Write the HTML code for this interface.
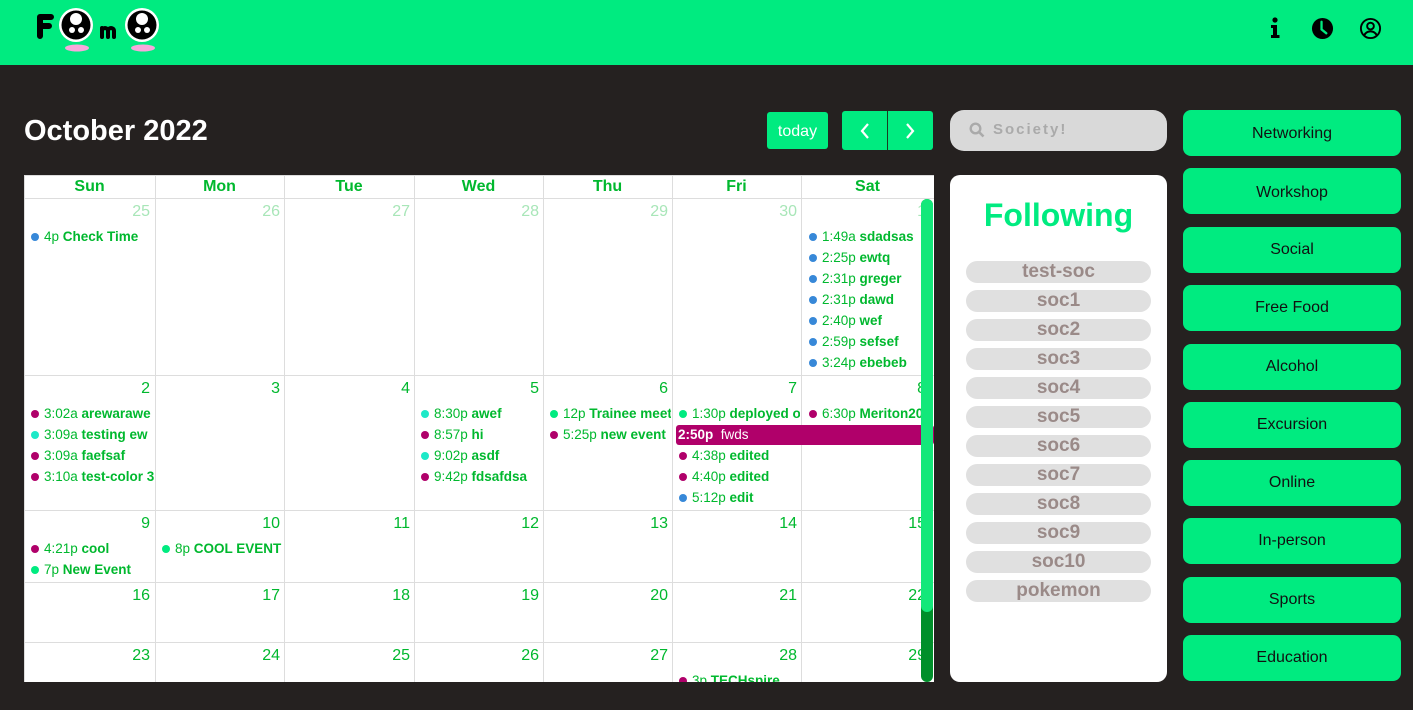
<!DOCTYPE html>
<html><head><meta charset="utf-8"><style>
*{margin:0;padding:0;box-sizing:border-box}
body{width:1413px;height:710px;background:#252120;font-family:"Liberation Sans",sans-serif;position:relative;overflow:hidden}
.a{position:absolute}
.hdr{left:0;top:0;width:1413px;height:65px;background:#00eb80}
.cal{left:24px;top:175px;width:910px;height:507px;background:#fff;overflow:hidden}
.vl{position:absolute;top:0;width:1px;height:507px;background:#ddd}
.hl{position:absolute;left:0;width:910px;height:1px;background:#ddd}
.dh{position:absolute;top:3px;font-weight:bold;font-size:16px;color:#00b82e;text-align:center}
.dn{position:absolute;font-size:16px;color:#00b82e;text-align:right}
.dn.o{color:#a8e6b8}
.ev{position:absolute;font-size:13.5px;color:#00b82e;white-space:nowrap;overflow:hidden;height:18px;line-height:18px}
.ev i{display:inline-block;width:8px;height:8px;border-radius:50%;margin:0 5px 0 0;vertical-align:0px}
.ev b{font-weight:bold}
.B{background:#3788d8}.C{background:#1de9c8}.M{background:#b0006a}.G{background:#00eb80}
.pill{position:absolute;left:966px;width:185px;height:22px;border-radius:11px;background:#e0e0e0;color:#9a8a88;font-size:19px;font-weight:bold;text-align:center;line-height:22px}
.btn{position:absolute;left:1183px;width:218px;height:46px;border-radius:8px;background:#00eb80;color:#111;font-size:16px;text-align:center;line-height:46px}
</style></head><body>
<div class="a hdr"></div>
<svg class="a" style="left:0;top:0" width="180" height="60" viewBox="0 0 180 60">
<path d="M40 36V17h11M40 26h9" stroke="#000" stroke-width="6" stroke-linecap="round" stroke-linejoin="round" fill="none"/>
<circle cx="76" cy="25" r="17" fill="#fff"/><circle cx="76" cy="25" r="14.5" fill="#000"/>
<circle cx="76" cy="19" r="6" fill="#fff"/><circle cx="72" cy="30" r="3" fill="#fff"/><circle cx="81" cy="30" r="3" fill="#fff"/>
<path d="M102 37v-9M102 31c0-4 6-4 6 0v6M108 31c0-4 6-4 6 0v6" stroke="#000" stroke-width="4" stroke-linecap="round" fill="none"/>
<circle cx="142" cy="25" r="17" fill="#fff"/><circle cx="142" cy="25" r="14.5" fill="#000"/>
<circle cx="142" cy="19" r="6" fill="#fff"/><circle cx="138" cy="30" r="3" fill="#fff"/><circle cx="147" cy="30" r="3" fill="#fff"/>
<ellipse cx="77" cy="48" rx="12" ry="3.5" fill="#f7a8dc"/><ellipse cx="143" cy="48" rx="12" ry="3.5" fill="#f7a8dc"/>
</svg>
<svg class="a" style="left:1266px;top:17px" width="18" height="22" viewBox="0 0 18 22"><circle cx="9" cy="3" r="2.6" fill="#000"/><path d="M5 8h6v10h2.5v3h-8.5v-3h2v-7h-2z" fill="#000"/></svg>
<svg class="a" style="left:1311px;top:17px" width="23" height="23" viewBox="0 0 24 24"><circle cx="12" cy="12" r="11" fill="#000"/><path d="M11 5v8l5 4" stroke="#00eb80" stroke-width="2.4" fill="none" stroke-linecap="round"/></svg>
<svg class="a" style="left:1359px;top:17px" width="23" height="23" viewBox="0 0 24 24" fill="none" stroke="#000" stroke-width="2"><circle cx="12" cy="12" r="10"/><circle cx="12" cy="9.5" r="3.5"/><path d="M5.5 19c1.5-3 4-4 6.5-4s5 1 6.5 4"/></svg>

<div class="a" style="left:24px;top:115px;color:#fff;font-weight:bold;font-size:29px">October 2022</div>
<div class="a" style="left:767px;top:112px;width:61px;height:37px;background:#00eb80;border-radius:3px;color:#fff;font-size:16px;text-align:center;line-height:39px">today</div>
<div class="a" style="left:842px;top:111px;width:91px;height:39px;background:#00eb80;border-radius:3px"></div>
<div class="a" style="left:887px;top:111px;width:1px;height:39px;background:#1a3a20"></div>
<svg class="a" style="left:858px;top:122px" width="14" height="18"><path d="M10 2L4 9l6 7" stroke="#fff" stroke-width="2.2" fill="none"/></svg>
<svg class="a" style="left:903px;top:122px" width="14" height="18"><path d="M4 2l6 7-6 7" stroke="#fff" stroke-width="2.2" fill="none"/></svg>
<div class="a" style="left:950px;top:110px;width:217px;height:41px;background:#d9d9d9;border-radius:14px"></div>
<svg class="a" style="left:969px;top:122px" width="16" height="16"><circle cx="6.5" cy="6.5" r="4.8" stroke="#aaa" stroke-width="2.4" fill="none"/><path d="M10 10l4.5 4.5" stroke="#aaa" stroke-width="2.6"/></svg>
<div class="a" style="left:993px;top:121px;color:#aaa;font-weight:bold;font-size:15px;letter-spacing:2px">Society!</div>

<div class="a cal">
<div class="vl" style="left:0"></div><div class="vl" style="left:131px"></div><div class="vl" style="left:260px"></div><div class="vl" style="left:390px"></div><div class="vl" style="left:519px"></div><div class="vl" style="left:648px"></div><div class="vl" style="left:777px"></div>
<div class="hl" style="top:0"></div><div class="hl" style="top:23px"></div><div class="hl" style="top:200px"></div><div class="hl" style="top:335px"></div><div class="hl" style="top:407px"></div><div class="hl" style="top:467px"></div>
<div class="dh" style="left:0;width:131px">Sun</div><div class="dh" style="left:131px;width:129px">Mon</div><div class="dh" style="left:260px;width:130px">Tue</div><div class="dh" style="left:390px;width:129px">Wed</div><div class="dh" style="left:519px;width:129px">Thu</div><div class="dh" style="left:648px;width:129px">Fri</div><div class="dh" style="left:777px;width:133px">Sat</div>

<div class="dn o" style="left:0;width:126px;top:28px">25</div><div class="dn o" style="left:131px;width:125px;top:28px">26</div><div class="dn o" style="left:260px;width:126px;top:28px">27</div><div class="dn o" style="left:390px;width:125px;top:28px">28</div><div class="dn o" style="left:519px;width:125px;top:28px">29</div><div class="dn o" style="left:648px;width:125px;top:28px">30</div><div class="dn o" style="left:777px;width:125px;top:28px">1</div>
<div class="dn" style="left:0;width:126px;top:205px">2</div><div class="dn" style="left:131px;width:125px;top:205px">3</div><div class="dn" style="left:260px;width:126px;top:205px">4</div><div class="dn" style="left:390px;width:125px;top:205px">5</div><div class="dn" style="left:519px;width:125px;top:205px">6</div><div class="dn" style="left:648px;width:125px;top:205px">7</div><div class="dn" style="left:777px;width:125px;top:205px">8</div>
<div class="dn" style="left:0;width:126px;top:340px">9</div><div class="dn" style="left:131px;width:125px;top:340px">10</div><div class="dn" style="left:260px;width:126px;top:340px">11</div><div class="dn" style="left:390px;width:125px;top:340px">12</div><div class="dn" style="left:519px;width:125px;top:340px">13</div><div class="dn" style="left:648px;width:125px;top:340px">14</div><div class="dn" style="left:777px;width:125px;top:340px">15</div>
<div class="dn" style="left:0;width:126px;top:412px">16</div><div class="dn" style="left:131px;width:125px;top:412px">17</div><div class="dn" style="left:260px;width:126px;top:412px">18</div><div class="dn" style="left:390px;width:125px;top:412px">19</div><div class="dn" style="left:519px;width:125px;top:412px">20</div><div class="dn" style="left:648px;width:125px;top:412px">21</div><div class="dn" style="left:777px;width:125px;top:412px">22</div>
<div class="dn" style="left:0;width:126px;top:472px">23</div><div class="dn" style="left:131px;width:125px;top:472px">24</div><div class="dn" style="left:260px;width:126px;top:472px">25</div><div class="dn" style="left:390px;width:125px;top:472px">26</div><div class="dn" style="left:519px;width:125px;top:472px">27</div><div class="dn" style="left:648px;width:125px;top:472px">28</div><div class="dn" style="left:777px;width:125px;top:472px">29</div>

<div class="ev" style="left:7px;top:53px;width:122px"><i class="B"></i>4p <b>Check Time</b></div>
<div class="ev" style="left:785px;top:53px;width:112px"><i class="B"></i>1:49a <b>sdadsas</b></div>
<div class="ev" style="left:785px;top:74px;width:112px"><i class="B"></i>2:25p <b>ewtq</b></div>
<div class="ev" style="left:785px;top:95px;width:112px"><i class="B"></i>2:31p <b>greger</b></div>
<div class="ev" style="left:785px;top:116px;width:112px"><i class="B"></i>2:31p <b>dawd</b></div>
<div class="ev" style="left:785px;top:137px;width:112px"><i class="B"></i>2:40p <b>wef</b></div>
<div class="ev" style="left:785px;top:158px;width:112px"><i class="B"></i>2:59p <b>sefsef</b></div>
<div class="ev" style="left:785px;top:179px;width:112px"><i class="B"></i>3:24p <b>ebebeb</b></div>

<div class="ev" style="left:7px;top:230px;width:123px"><i class="M"></i>3:02a <b>arewarawe</b></div>
<div class="ev" style="left:7px;top:251px;width:123px"><i class="C"></i>3:09a <b>testing ew</b></div>
<div class="ev" style="left:7px;top:272px;width:123px"><i class="M"></i>3:09a <b>faefsaf</b></div>
<div class="ev" style="left:7px;top:293px;width:123px"><i class="M"></i>3:10a <b>test-color 3</b></div>
<div class="ev" style="left:397px;top:230px;width:121px"><i class="C"></i>8:30p <b>awef</b></div>
<div class="ev" style="left:397px;top:251px;width:121px"><i class="M"></i>8:57p <b>hi</b></div>
<div class="ev" style="left:397px;top:272px;width:121px"><i class="C"></i>9:02p <b>asdf</b></div>
<div class="ev" style="left:397px;top:293px;width:121px"><i class="M"></i>9:42p <b>fdsafdsa</b></div>
<div class="ev" style="left:526px;top:230px;width:121px"><i class="G"></i>12p <b>Trainee meeting</b></div>
<div class="ev" style="left:526px;top:251px;width:121px"><i class="M"></i>5:25p <b>new event</b></div>
<div class="ev" style="left:655px;top:230px;width:121px"><i class="G"></i>1:30p <b>deployed on</b></div>
<div class="a" style="left:652px;top:250px;width:258px;height:20px;background:#b0006a;border-radius:3px;color:#fff;font-size:13.5px;line-height:20px;padding-left:2px"><b>2:50p</b>&nbsp; fwds</div>
<div class="ev" style="left:655px;top:272px;width:121px"><i class="M"></i>4:38p <b>edited</b></div>
<div class="ev" style="left:655px;top:293px;width:121px"><i class="M"></i>4:40p <b>edited</b></div>
<div class="ev" style="left:655px;top:314px;width:121px"><i class="B"></i>5:12p <b>edit</b></div>
<div class="ev" style="left:785px;top:230px;width:112px"><i class="M"></i>6:30p <b>Meriton2022</b></div>

<div class="ev" style="left:7px;top:365px;width:123px"><i class="M"></i>4:21p <b>cool</b></div>
<div class="ev" style="left:7px;top:386px;width:123px"><i class="G"></i>7p <b>New Event</b></div>
<div class="ev" style="left:138px;top:365px;width:121px"><i class="G"></i>8p <b>COOL EVENT</b></div>
<div class="ev" style="left:655px;top:497px;width:121px"><i class="M"></i>3p <b>TECHspire</b></div>

<div class="a" style="left:897px;top:24px;width:12px;height:483px;background:#008f2a;border-radius:6px"></div>
<div class="a" style="left:897px;top:24px;width:12px;height:413px;background:#13e87a;border-radius:6px"></div>
</div>

<div class="a" style="left:950px;top:175px;width:217px;height:507px;background:#fff;border-radius:10px"></div>
<div class="a" style="left:950px;top:197px;width:217px;text-align:center;color:#00eb80;font-weight:bold;font-size:32px">Following</div>
<div class="pill" style="top:261px">test-soc</div><div class="pill" style="top:290px">soc1</div><div class="pill" style="top:319px">soc2</div><div class="pill" style="top:348px">soc3</div><div class="pill" style="top:377px">soc4</div><div class="pill" style="top:406px">soc5</div><div class="pill" style="top:435px">soc6</div><div class="pill" style="top:464px">soc7</div><div class="pill" style="top:493px">soc8</div><div class="pill" style="top:522px">soc9</div><div class="pill" style="top:551px">soc10</div><div class="pill" style="top:580px">pokemon</div>

<div class="btn" style="top:110px;line-height:47px">Networking</div><div class="btn" style="top:168px;line-height:49px">Workshop</div><div class="btn" style="top:227px">Social</div><div class="btn" style="top:285px">Free Food</div><div class="btn" style="top:344px">Alcohol</div><div class="btn" style="top:402px">Excursion</div><div class="btn" style="top:460px">Online</div><div class="btn" style="top:518px">In-person</div><div class="btn" style="top:577px">Sports</div><div class="btn" style="top:635px">Education</div>
</body></html>
